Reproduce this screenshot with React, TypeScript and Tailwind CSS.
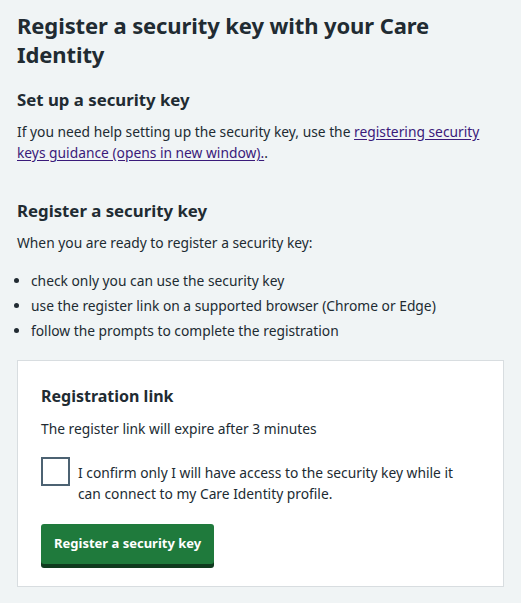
import React from "react";

export default function App() {
  return (
    <div className="min-h-[603px] w-[521px] bg-[#f0f4f5] text-[#212b32] pl-[17px] pr-[17px] pt-[11px]" style={{ fontFamily: '"Noto Sans", "Open Sans", sans-serif' }}>
      <h1 className="text-[22px] font-bold leading-[29px] tracking-[-0.1px]">Register a security key with your Care Identity</h1>
      <h2 className="mt-[19px] text-[16.8px] font-bold leading-[24px]">Set up a security key</h2>
      <p className="mt-[8.5px] text-[13.8px] leading-[21px]">
        If you need help setting up the security key, use the{" "}
        <a href="#" className="text-[#3a1a7a] underline underline-offset-2">registering security keys guidance (opens in new window).</a>.
      </p>
      <h2 className="mt-[36px] text-[16.8px] font-bold leading-[24px]">Register a security key</h2>
      <p className="mt-[9.5px] text-[13.8px] leading-[21px]">When you are ready to register a security key:</p>
      <ul className="mt-[17px] text-[13.8px] leading-[21px] pl-[14px] list-disc flex flex-col gap-[4px]">
        <li>check only you can use the security key</li>
        <li>use the register link on a supported browser (Chrome or Edge)</li>
        <li>follow the prompts to complete the registration</li>
      </ul>
      <div className="mt-[18.5px] bg-white border border-[#d8dde0] px-[23px] pt-[23px] pb-[22px]">
        <h3 className="text-[16px] font-bold leading-[24px]">Registration link</h3>
        <p className="mt-[10.5px] text-[13.8px] leading-[21px]">The register link will expire after 3 minutes</p>
        <div className="mt-[17.5px] flex items-start gap-[8px]">
          <div className="w-[29px] h-[29px] shrink-0 border-2 border-[#4c6272] bg-white" />
          <p className="pt-[5.5px] pr-[16px] text-[13.8px] leading-[21px]">I confirm only I will have access to the security key while it can connect to my Care Identity profile.</p>
        </div>
        <button className="mt-[19.5px] block bg-[#1f7a3c] text-white font-bold text-[13px] px-[13px] h-[40px] rounded-[3px] shadow-[0_4px_0_#0f3a1e]">Register a security key</button>
      </div>
    </div>
  );
}
